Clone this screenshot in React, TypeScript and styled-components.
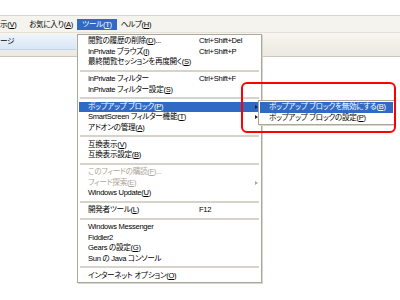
import React from 'react';
import styled, { createGlobalStyle } from 'styled-components';

const GlobalStyle = createGlobalStyle`
    body {
        margin: 0;
        background: #ffffff;
        font-family: "Liberation Sans", "Noto Sans CJK JP", sans-serif;
    }
`

const Screen = styled.div`
    position: relative;
    width: 400px;
    height: 300px;
    overflow: hidden;
    display: flex;
    flex-direction: column;
    background: #ffffff;
    font-size: 7.6px;
    letter-spacing: -0.3px;
    font-feature-settings: "palt";
    color: #000000;
`

const AddressStrip = styled.div`
    height: 15px;
    flex: none;
    background: #ffffff;
    border-bottom: 1px solid #d3d6da;
`

const MenuBar = styled.div`
    height: 17px;
    flex: none;
    display: flex;
    align-items: center;
    background: #f4f3ee;
    border-bottom: 1px solid #e2e0d7;
    padding-top: 1px;
    box-sizing: border-box;
`

const MenuBarItem = styled.div<{ $active?: boolean; $w: number; $left?: boolean }>`
    height: 11px;
    line-height: 11px;
    width: ${p => p.$w}px;
    flex: none;
    box-sizing: border-box;
    text-align: ${p => (p.$left ? 'left' : 'center')};
    white-space: nowrap;
    background: ${p => (p.$active ? '#316ac5' : 'transparent')};
    color: ${p => (p.$active ? '#ffffff' : '#000000')};
`

const CommandRow = styled.div`
    height: 23px;
    flex: none;
    display: flex;
    align-items: flex-start;
    background: linear-gradient(#f6f5f0, #ebe9e0);
    border-bottom: 1px solid #cac7bd;
`

const PageTab = styled.div`
    margin-top: 2px;
    width: 76px;
    height: 14px;
    line-height: 14px;
    background: linear-gradient(#eef4fc, #d9e6f6);
    border-bottom: 1px solid #c3d3ea;
    white-space: nowrap;
    overflow: hidden;
`

const Content = styled.div`
    flex: 1;
    background: #ffffff;
`

const DropMenu = styled.div`
    position: absolute;
    left: 77px;
    top: 34px;
    width: 185px;
    box-sizing: border-box;
    background: #ffffff;
    border: 1px solid #aca899;
    box-shadow: 1px 1px 0 #d8d6ce;
    padding: 1px 0;
`

const SubMenu = styled(DropMenu)`
    left: 258px;
    top: 100px;
    width: 137px;
`

const Row = styled.div<{ $hot?: boolean; $off?: boolean }>`
    position: relative;
    display: flex;
    height: 10.5px;
    line-height: 10.5px;
    margin: 0 1px;
    padding-left: 9px;
    white-space: nowrap;
    background: ${p => (p.$hot ? '#316ac5' : 'transparent')};
    color: ${p => (p.$hot ? '#ffffff' : p.$off ? '#aca899' : '#000000')};
`

const Label = styled.span`
    width: 111px;
    flex: none;
`

const Shortcut = styled.span`
    flex: none;
`

const Arrow = styled.span<{ $off?: boolean }>`
    position: absolute;
    right: 2px;
    top: 3px;
    width: 0;
    height: 0;
    border-top: 2.5px solid transparent;
    border-bottom: 2.5px solid transparent;
    border-left: 3px solid ${p => (p.$off ? '#aca899' : '#222222')};
`

const Separator = styled.div`
    height: 2px;
    margin: 2.25px 2px;
    background: #d6d3cb;
`

const Callout = styled.div`
    position: absolute;
    left: 241px;
    top: 82px;
    width: 155px;
    height: 51px;
    box-sizing: border-box;
    border: 2px solid #ff0000;
    border-radius: 6px;
`

type Item = {
    text?: string;
    key?: string;
    tail?: string;
    shortcut?: string;
    arrow?: boolean;
    off?: boolean;
    hot?: boolean;
    sep?: boolean;
};

const items: Item[] = [
    { text: '閲覧の履歴の削除', key: 'D', tail: '...', shortcut: 'Ctrl+Shift+Del' },
    { text: 'InPrivate ブラウズ', key: 'I', shortcut: 'Ctrl+Shift+P' },
    { text: '最終閲覧セッションを再度開く', key: 'S' },
    { sep: true },
    { text: 'InPrivate フィルター', shortcut: 'Ctrl+Shift+F' },
    { text: 'InPrivate フィルター設定', key: 'S' },
    { sep: true },
    { text: 'ポップアップ ブロック', key: 'P', arrow: true, hot: true },
    { text: 'SmartScreen フィルター機能', key: 'T', arrow: true },
    { text: 'アドオンの管理', key: 'A' },
    { sep: true },
    { text: '互換表示', key: 'V' },
    { text: '互換表示設定', key: 'B' },
    { sep: true },
    { text: 'このフィードの購読', key: 'F', tail: '...', off: true },
    { text: 'フィード探索', key: 'E', off: true, arrow: true },
    { text: 'Windows Update', key: 'U' },
    { sep: true },
    { text: '開発者ツール', key: 'L', shortcut: 'F12' },
    { sep: true },
    { text: 'Windows Messenger' },
    { text: 'Fiddler2' },
    { text: 'Gears の設定', key: 'G' },
    { text: 'Sun の Java コンソール' },
    { sep: true },
    { text: 'インターネット オプション', key: 'O' },
];

const subItems: Item[] = [
    { text: 'ポップアップ ブロックを無効にする', key: 'B', hot: true },
    { text: 'ポップアップ ブロックの設定', key: 'P' },
];

function ItemText({ item }: { item: Item }) {
    return (
        <>
            {item.text}
            {item.key && (
                <>
                    (<u>{item.key}</u>)
                </>
            )}
            {item.tail}
        </>
    );
}

function MenuRows({ list }: { list: Item[] }) {
    return (
        <>
            {list.map((item, index) =>
                item.sep ? (
                    <Separator key={index} />
                ) : (
                    <Row key={index} $hot={item.hot} $off={item.off}>
                        <Label>
                            <ItemText item={item} />
                        </Label>
                        {item.shortcut && <Shortcut>{item.shortcut}</Shortcut>}
                        {item.arrow && <Arrow $off={item.off} />}
                    </Row>
                )
            )}
        </>
    );
}

function App() {
    return (
        <Screen>
            <GlobalStyle />
            <AddressStrip />
            <MenuBar>
                <MenuBarItem $w={25} $left>示(<u>V</u>)</MenuBarItem>
                <MenuBarItem $w={52}>お気に入り(<u>A</u>)</MenuBarItem>
                <MenuBarItem $w={40} $active>ツール(<u>T</u>)</MenuBarItem>
                <MenuBarItem $w={38}>ヘルプ(<u>H</u>)</MenuBarItem>
            </MenuBar>
            <CommandRow>
                <PageTab>ージ</PageTab>
            </CommandRow>
            <Content />

            <DropMenu>
                <MenuRows list={items} />
            </DropMenu>
            <SubMenu>
                <MenuRows list={subItems} />
            </SubMenu>
            <Callout />
        </Screen>
    );
}

export default App;
